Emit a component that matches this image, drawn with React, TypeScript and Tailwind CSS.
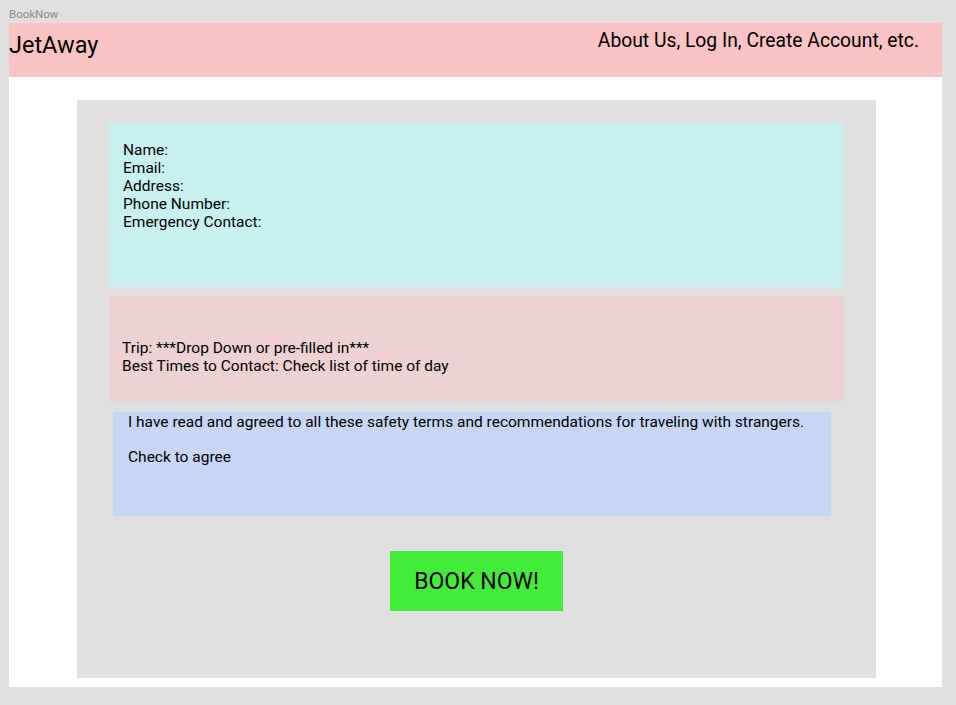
export default function App() {
  return (
    <div className="min-h-screen bg-[#e0e0e0] px-[9px] font-['Roboto',sans-serif] text-black">
      <div className="h-[23px] pt-[8px] text-[11.5px] leading-[13px] text-[#8a8a8a]">BookNow</div>

      <div className="flex h-[664px] w-[933px] flex-col bg-white">
        {/* top bar */}
        <header className="flex h-[54px] shrink-0 items-start justify-between bg-[#f9c3c3] pr-[23px]">
          <div className="pt-[8px] text-[23.5px] leading-[28px]">JetAway</div>
          <nav className="pt-[7px] text-[19.3px] leading-[21px]">About Us, Log In, Create Account, etc.</nav>
        </header>

        {/* form area */}
        <div className="ml-[68px] mt-[23px] flex h-[578px] w-[799px] flex-col bg-[#e0e0e0] pt-[23px]">
          <div className="ml-[32px] h-[164px] w-[735px] bg-[#c9f0f0] pl-[14px] pt-[18px] text-[15.5px] leading-[18px]">
            <p>Name:</p>
            <p>Email:</p>
            <p>Address:</p>
            <p>Phone Number:</p>
            <p>Emergency Contact:</p>
          </div>

          <div className="ml-[32px] mt-[9px] h-[105px] w-[735px] bg-[#eed1d3] pl-[13px] pt-[43px] text-[15.5px] leading-[18px]">
            <p>Trip: ***Drop Down or pre-filled in***</p>
            <p>Best Times to Contact: Check list of time of day</p>
          </div>

          <div className="ml-[36px] mt-[11px] h-[104px] w-[718px] bg-[#c7d6f5] pl-[15px] pt-[1px] text-[15.5px] leading-[18px]">
            <p>I have read and agreed to all these safety terms and recommendations for traveling with strangers.</p>
            <p className="mt-[17px]">Check to agree</p>
          </div>

          <div className="mt-[35px] flex justify-center">
            <button className="h-[60px] w-[173px] bg-[#44ec3a] text-[23px] leading-[27px] text-black">BOOK NOW!</button>
          </div>
        </div>
      </div>
    </div>
  )
}
